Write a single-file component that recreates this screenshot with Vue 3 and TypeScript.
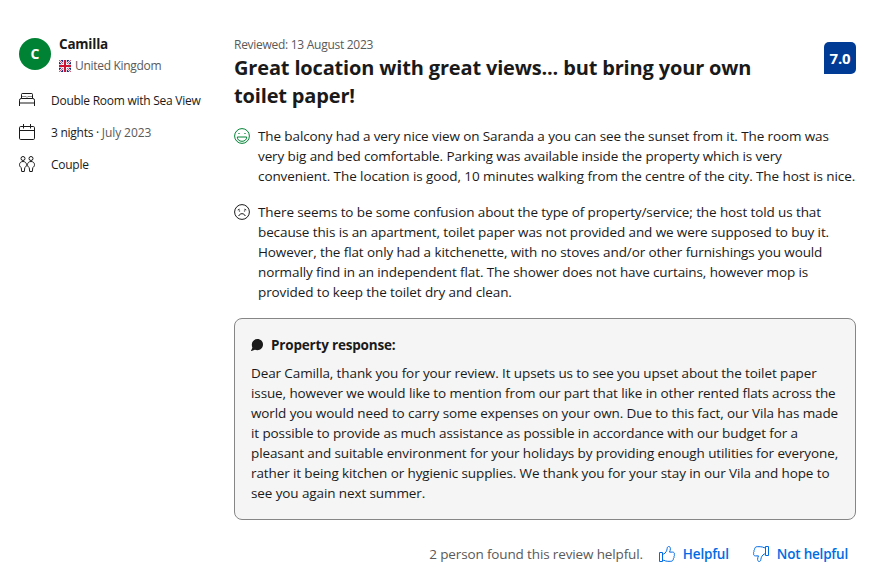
<script setup lang="ts">
interface Line {
  text: string
  wide?: boolean
}
const liked: Line[] = [
  { text: 'The balcony had a very nice view on Saranda a you can see the sunset from it. The room was' },
  { text: 'very big and bed comfortable. Parking was available inside the property which is very' },
  { text: 'convenient. The location is good, 10 minutes walking from the centre of the city. The host is nice.', wide: true },
]
const disliked: string[] = [
  'There seems to be some confusion about the type of property/service; the host told us that',
  'because this is an apartment, toilet paper was not provided and we were supposed to buy it.',
  'However, the flat only had a kitchenette, with no stoves and/or other furnishings you would',
  'normally find in an independent flat. The shower does not have curtains, however mop is',
  'provided to keep the toilet dry and clean.',
]
const response: string[] = [
  'Dear Camilla, thank you for your review. It upsets us to see you upset about the toilet paper',
  'issue, however we would like to mention from our part that like in other rented flats across the',
  'world you would need to carry some expenses on your own. Due to this fact, our Vila has made',
  'it possible to provide as much assistance as possible in accordance with our budget for a',
  'pleasant and suitable environment for your holidays by providing enough utilities for everyone,',
  'rather it being kitchen or hygienic supplies. We thank you for your stay in our Vila and hope to',
  'see you again next summer.',
]
</script>

<template>
  <article class="review">
    <aside class="guest">
      <div class="profile">
        <div class="avatar">C</div>
        <div class="who">
          <div class="name">Camilla</div>
          <div class="country">
            <svg class="flag" viewBox="0 0 12 12">
              <rect width="12" height="12" fill="#1b2c7c" />
              <path d="M0 0l12 12M12 0L0 12" stroke="#fff" stroke-width="2" />
              <path d="M0 0l12 12M12 0L0 12" stroke="#d22c45" stroke-width=".8" />
              <path d="M6 0v12M0 6h12" stroke="#fff" stroke-width="3.600" />
              <path d="M6 0v12M0 6h12" stroke="#cf1230" stroke-width="2" />
            </svg>
            <span>United Kingdom</span>
          </div>
        </div>
      </div>
      <ul class="facts">
        <li>
          <svg class="icon bed" viewBox="0 0 16 16">
            <path d="M2.500 6.500V2.400q0-.9.9-.9h9.200q.9 0 .9.9v4.100M.5 14V8.200q0-1.700 1.700-1.700h11.600q1.700 0 1.700 1.700V14" />
            <path d="M3 1.500h10M3 4.500h4.200l.8 1 .8-1H13M1 10.500h14M1 11.500h14" opacity=".5" />
          </svg>
          <span>Double Room with Sea View</span>
        </li>
        <li>
          <svg class="icon" viewBox="0 0 16 16">
            <rect x=".5" y="2.500" width="15" height="13" rx="1.200" />
            <path d="M.5 6.500h15M4.500 0v4.500M11.500 0v4.500" />
          </svg>
          <span>3 nights · <span class="muted">July 2023</span></span>
        </li>
        <li>
          <svg class="icon" viewBox="0 0 16 16">
            <circle cx="4" cy="2.500" r="2" />
            <circle cx="12" cy="2.500" r="2" />
            <path d="M4 5.500C2 5.500.5 6.800.5 8.700c0 1.400.6 2.200 1.700 2.800l.5 4h2.600l.5-4c1.100-.6 1.700-1.400 1.700-2.800C7.500 6.800 6 5.500 4 5.500z" />
            <path d="M12 5.500c-2 0-3.500 1.300-3.500 3.200 0 1.400.6 2.200 1.700 2.800l.5 4h2.600l.5-4c1.100-.6 1.700-1.400 1.700-2.800 0-1.900-1.500-3.200-3.500-3.200z" />
          </svg>
          <span>Couple</span>
        </li>
      </ul>
    </aside>

    <section class="content">
      <header class="head">
        <div class="heading">
          <div class="date">Reviewed: 13 August 2023</div>
          <h3 class="title">Great location with great views... but bring your own<br />toilet paper!</h3>
        </div>
        <div class="score">7.0</div>
      </header>

      <div class="comment">
        <svg class="icon good" viewBox="0 0 16 16">
          <circle cx="8" cy="8" r="7.400" />
          <path d="M3.300 9h9.400c0 2.600-1.900 4.300-4.700 4.300S3.300 11.600 3.300 9z" />
          <path class="eyes" d="M4.400 5.500h1.200M10.400 5.500h1.200" />
        </svg>
        <p><span v-for="line in liked" :key="line.text" class="line" :class="{ wide: line.wide }">{{ line.text }}</span></p>
      </div>
      <div class="comment">
        <svg class="icon" viewBox="0 0 16 16">
          <circle cx="8" cy="8" r="7.400" />
          <path d="M4.700 12c.6-1.500 1.800-2.300 3.300-2.300s2.700.8 3.300 2.300M3.800 6l1.800-.8M12.200 6l-1.800-.8" />
          <path class="eyes" d="M4.900 7h1.200M9.900 7h1.200" />
        </svg>
        <p><span v-for="line in disliked" :key="line" class="line">{{ line }}</span></p>
      </div>

      <div class="response">
        <div class="response-title">
          <svg class="bubble" viewBox="0 0 12 12">
            <path d="M6.400 0C9.600 0 12 2.400 12 5.500S9.600 11.200 6.400 11.200c-.9 0-1.800-.2-2.500-.5L.5 12c-.4.1-.6-.3-.4-.6l1.300-2.700C1 7.800.8 6.700.8 5.500.8 2.400 3.200 0 6.400 0z" />
          </svg>
          <span>Property response:</span>
        </div>
        <p><span v-for="line in response" :key="line" class="line">{{ line }}</span></p>
      </div>

      <footer class="votes">
        <span class="count">2 person found this review helpful.</span>
        <button class="vote" type="button">
          <svg class="icon" viewBox="0 0 16 16">
            <path d="M.5 6.500h3v9h-3zM3.500 8h1.300C6.500 7 8 5 8.200 2.300 8.300 1.200 8.800.5 9.700.5c1.200 0 1.700 1 1.700 2.200 0 1.200-.4 2.400-.9 3.400h3c1.500 0 2.200 1.100 1.800 2.200.3.700.2 1.600-.3 2.200.2.800 0 1.600-.6 2.100 0 1.700-1 2.700-2.600 2.700h-3c-1.700 0-2.900-.5-3.900-1H3.500" />
          </svg>
          <span>Helpful</span>
        </button>
        <button class="vote" type="button">
          <svg class="icon down" viewBox="0 0 16 16">
            <path d="M.5 6.500h3v9h-3zM3.500 8h1.300C6.500 7 8 5 8.200 2.300 8.300 1.200 8.800.5 9.700.5c1.200 0 1.700 1 1.700 2.200 0 1.200-.4 2.400-.9 3.400h3c1.500 0 2.200 1.100 1.800 2.200.3.700.2 1.600-.3 2.200.2.800 0 1.600-.6 2.100 0 1.700-1 2.700-2.600 2.700h-3c-1.700 0-2.900-.5-3.900-1H3.500" />
          </svg>
          <span>Not helpful</span>
        </button>
      </footer>
    </section>
  </article>
</template>

<style>
body {
  background: #fff;
}
</style>

<style scoped>
.review {
  display: grid;
  grid-template-columns: 199px 622px;
  column-gap: 16px;
  box-sizing: border-box;
  width: 875px;
  height: 577px;
  padding: 34px 19px 0;
  color: #1a1a1a;
  font-family: 'Open Sans', 'Noto Sans', sans-serif;
  font-size: 13.5px;
  line-height: 20px;
  letter-spacing: -0.108px;
}
p,
h3,
ul {
  margin: 0;
  padding: 0;
}
.icon {
  flex: none;
  width: 16px;
  height: 16px;
  fill: none;
  stroke: currentColor;
  stroke-width: 1;
}
.profile {
  display: flex;
  align-items: center;
  gap: 8px;
  height: 40px;
}
.avatar {
  flex: none;
  width: 32px;
  height: 32px;
  border-radius: 50%;
  background: #008234;
  color: #fff;
  font-size: 14px;
  font-weight: 700;
  line-height: 32px;
  text-align: center;
}
.name {
  font-weight: 700;
  letter-spacing: -0.22px;
}
.country {
  display: flex;
  align-items: center;
  gap: 4px;
  height: 20px;
  padding-top: 2px;
  color: #595959;
  font-size: 12px;
  letter-spacing: -0.3px;
}
.who {
  height: 40px;
}
.flag {
  width: 12px;
  height: 12px;
}
.facts {
  display: flex;
  flex-direction: column;
  gap: 12px;
  padding-top: 16px;
  list-style: none;
  font-size: 12px;
  letter-spacing: -0.26px;
}
.facts li {
  display: flex;
  align-items: center;
  gap: 16px;
  height: 20px;
  white-space: nowrap;
}
.facts li > span {
  padding-top: 2px;
}
.facts .muted {
  color: #595959;
  letter-spacing: -0.08px;
}
.head {
  display: flex;
  justify-content: space-between;
}
.date {
  box-sizing: border-box;
  height: 20px;
  padding-top: 1px;
  color: #595959;
  font-size: 12px;
  letter-spacing: -0.28px;
}
.title {
  font-size: 20px;
  font-weight: 700;
  line-height: 28px;
  letter-spacing: -0.16px;
  white-space: nowrap;
}
.score {
  width: 32px;
  height: 32px;
  margin-top: 8px;
  border-radius: 5px 5px 5px 0;
  background: #003b95;
  color: #fff;
  font-size: 15px;
  font-weight: 700;
  line-height: 33px;
  text-align: center;
}
.comment {
  display: flex;
  gap: 8px;
  margin-top: 16px;
}
.comment .icon {
  margin-top: 2px;
}
.eyes {
  stroke-width: 1.2;
}
.good {
  color: #008234;
}
.line {
  display: block;
  white-space: nowrap;
}
.line.wide {
  letter-spacing: -0.084px;
}
.response {
  box-sizing: border-box;
  height: 202px;
  margin-top: 16px;
  padding: 16px;
  border: 1px solid #868686;
  border-radius: 8px;
  background: #f5f5f5;
}
.response-title {
  display: flex;
  align-items: center;
  gap: 8px;
  margin-bottom: 8px;
  font-weight: 700;
  letter-spacing: -0.19px;
}
.bubble {
  width: 12px;
  height: 12px;
  fill: #1a1a1a;
}
.votes {
  display: flex;
  align-items: center;
  justify-content: flex-end;
  height: 36px;
  margin-top: 16px;
  padding-right: 8px;
}
.count {
  margin-right: 16px;
  color: #595959;
  letter-spacing: -0.14px;
}
.vote {
  display: flex;
  align-items: center;
  gap: 8px;
  padding: 0;
  border: 0;
  background: none;
  color: #006ce4;
  font: inherit;
  font-weight: 600;
  letter-spacing: -0.2px;
}
.vote + .vote {
  margin-left: 24px;
}
.down {
  transform: rotate(180deg);
}
</style>
